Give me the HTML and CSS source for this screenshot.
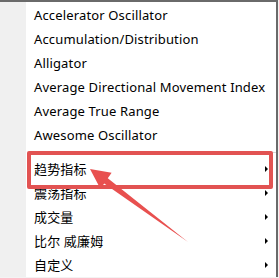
FILE: index.html
```html
<!DOCTYPE html>
<html lang="zh-CN">
<head>
<meta charset="utf-8">
<title>Indicators menu</title>
<link rel="stylesheet" href="styles.css">
</head>
<body>
<div class="menu">
  <ul class="items">
    <li class="item">Accelerator Oscillator</li>
    <li class="item">Accumulation/Distribution</li>
    <li class="item">Alligator</li>
    <li class="item">Average Directional Movement Index</li>
    <li class="item">Average True Range</li>
    <li class="item">Awesome Oscillator</li>
    <li class="separator"></li>
    <li class="item sub">趋势指标</li>
    <li class="item sub">震荡指标</li>
    <li class="item sub">成交量</li>
    <li class="item sub">比尔 威廉姆</li>
    <li class="item sub">自定义</li>
  </ul>
  <div class="highlight"></div>
  <svg class="pointer" width="279" height="278" viewBox="0 0 279 278">
    <polygon points="90,169 111.6,172.8 107.8,178.2 188,242 104.2,183.4 100.4,188.8" fill="#e8504f"/>
  </svg>
</div>
</body>
</html>
```

FILE: styles.css
```css
html, body {
  margin: 0;
  padding: 0;
  background: #f3f3f3;
}

.menu {
  position: relative;
  width: 276px;
  height: 275px;
  background: linear-gradient(to right, #f0f0f0 0, #f0f0f0 26px, #ffffff 26px);
  border-top: 2px solid #6a6a6a;
  border-right: 2px solid #6a6a6a;
  font-family: "Noto Sans", "Noto Sans CJK SC", sans-serif;
  font-size: 13px;
  letter-spacing: 0.15px;
  color: #000;
  overflow: hidden;
}

.items {
  list-style: none;
  margin: 0;
  padding: 1px 0 0 0;
}

.item {
  position: relative;
  height: 24px;
  line-height: 24px;
  padding-left: 34px;
  white-space: nowrap;
}

.item.sub::after {
  content: "";
  position: absolute;
  left: 265px;
  top: 9px;
  border-left: 3px solid #000;
  border-top: 3px solid transparent;
  border-bottom: 3px solid transparent;
}

.separator {
  height: 10px;
  display: flex;
  align-items: center;
  padding-left: 28px;
}

.separator::before {
  content: "";
  flex: 1;
  height: 1px;
  background: #d7d7d7;
}

.highlight {
  position: absolute;
  left: 27px;
  top: 149px;
  width: 238px;
  height: 30px;
  border: 4px solid #e25352;
  border-radius: 2px;
}

.pointer {
  position: absolute;
  left: 0;
  top: -2px;
}
```
